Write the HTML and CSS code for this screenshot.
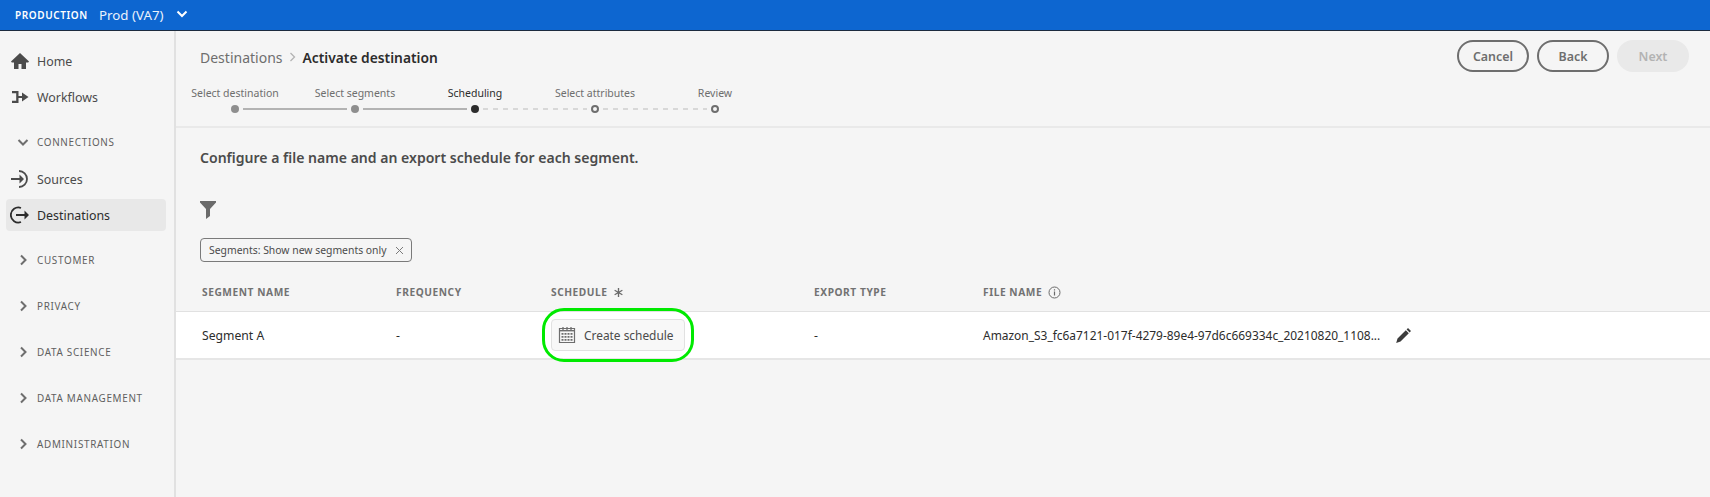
FILE: index.html
```html
<!DOCTYPE html>
<html lang="en">
<head>
<meta charset="utf-8">
<title>Activate destination</title>
<link rel="stylesheet" href="styles.css">
</head>
<body>
<header class="topbar">
  <span class="org">PRODUCTION</span>
  <span class="sandbox">Prod (VA7)</span>
  <svg class="top-chev" width="12" height="8" viewBox="0 0 12 8"><path d="M1.500 1.500 6 6l4.500-4.500" fill="none" stroke="#fff" stroke-width="2"/></svg>
</header>
<div class="shell">
  <nav class="sidebar">
    <a class="nav-item first"><svg class="nav-icon" viewBox="0 0 20 20"><path d="M10 2 1 10.600l.8.900H4V18h4.500v-5h3v5H16v-6.500h2.200l.8-.9z" fill="#4b4b4b"/></svg>Home</a>
    <a class="nav-item"><svg class="nav-icon" viewBox="0 0 20 20"><path d="M2 4h6.500v5h3.500V5.500L18.500 10 12 14.500V11H8.500v5H2v-2.200h4.200V6.200H2z" fill="#4b4b4b"/></svg>Workflows</a>
    <div class="group open"><svg class="chev" viewBox="0 0 12 12"><path d="M1.500 4 6 8.500 10.500 4" fill="none" stroke="#6e6e6e" stroke-width="2"/></svg>CONNECTIONS</div>
    <a class="nav-item tight first-tight"><svg class="nav-icon" viewBox="0 0 20 20"><path d="M9 2A8 8 0 1 1 9 18" fill="none" stroke="#4b4b4b" stroke-width="1.800"/><path d="M1 9h8.500V5.500L14 10l-4.500 4.500V11H1z" fill="#4b4b4b"/></svg>Sources</a>
    <a class="nav-item tight active"><svg class="nav-icon" viewBox="0 0 20 20"><path d="M11 3a7.500 7.500 0 1 0 0 14" fill="none" stroke="#2c2c2c" stroke-width="1.800"/><path d="M6 9h8.500V5.500L19 10l-4.500 4.500V11H6z" fill="#2c2c2c"/></svg>Destinations</a>
    <div class="group first-closed"><svg class="chev" viewBox="0 0 12 12"><path d="M4 1.500 8.500 6 4 10.500" fill="none" stroke="#6e6e6e" stroke-width="2"/></svg>CUSTOMER</div>
    <div class="group"><svg class="chev" viewBox="0 0 12 12"><path d="M4 1.500 8.500 6 4 10.500" fill="none" stroke="#6e6e6e" stroke-width="2"/></svg>PRIVACY</div>
    <div class="group"><svg class="chev" viewBox="0 0 12 12"><path d="M4 1.500 8.500 6 4 10.500" fill="none" stroke="#6e6e6e" stroke-width="2"/></svg>DATA SCIENCE</div>
    <div class="group"><svg class="chev" viewBox="0 0 12 12"><path d="M4 1.500 8.500 6 4 10.500" fill="none" stroke="#6e6e6e" stroke-width="2"/></svg>DATA MANAGEMENT</div>
    <div class="group"><svg class="chev" viewBox="0 0 12 12"><path d="M4 1.500 8.500 6 4 10.500" fill="none" stroke="#6e6e6e" stroke-width="2"/></svg>ADMINISTRATION</div>
  </nav>
  <main class="main">
    <section class="head">
      <div class="head-top">
        <div class="crumbs">
          <span class="crumb">Destinations</span>
          <svg class="crumb-sep" width="7" height="10" viewBox="0 0 7 10"><path d="M1.500 1 5.500 5l-4 4" fill="none" stroke="#b3b3b3" stroke-width="1.300"/></svg>
          <strong class="crumb-current">Activate destination</strong>
        </div>
        <div class="actions">
          <button class="btn">Cancel</button>
          <button class="btn">Back</button>
          <button class="btn disabled">Next</button>
        </div>
      </div>
      <div class="step-labels">
        <span>Select destination</span>
        <span>Select segments</span>
        <span class="current">Scheduling</span>
        <span>Select attributes</span>
        <span>Review</span>
      </div>
      <div class="track">
        <i class="dot done"></i><i class="line"></i>
        <i class="dot done"></i><i class="line"></i>
        <i class="dot now"></i><i class="line dashed"></i>
        <i class="dot todo"></i><i class="line dashed"></i>
        <i class="dot todo"></i>
      </div>
    </section>
    <section class="body">
      <h1 class="title">Configure a file name and an export schedule for each segment.</h1>
      <svg class="filter" width="16" height="18" viewBox="0 0 16 18"><path d="M0 0h16v1.500L10 8v7l-4 3V8L0 1.500z" fill="#6a6a6a"/></svg>
      <div class="chip">Segments: Show new segments only
        <svg width="9" height="9" viewBox="0 0 9 9"><path d="M1 1l7 7M8 1 1 8" fill="none" stroke="#7a7a7a" stroke-width="1"/></svg>
      </div>
    </section>
    <div class="table-head grid">
      <span>SEGMENT NAME</span>
      <span>FREQUENCY</span>
      <span class="with-icon">SCHEDULE <svg width="9" height="9" viewBox="0 0 10 10"><path d="M5 0v10M.7 2.500l8.600 5M9.300 2.500l-8.600 5" stroke="#6a6a6a" stroke-width="1.500"/></svg></span>
      <span>EXPORT TYPE</span>
      <span class="with-icon">FILE NAME <svg width="13" height="13" viewBox="0 0 13 13"><circle cx="6.500" cy="6.500" r="5.500" fill="none" stroke="#6a6a6a"/><path d="M6.500 5.500v4M6.500 3.200v1.300" stroke="#6a6a6a" stroke-width="1.200"/></svg></span>
    </div>
    <div class="table-row grid">
      <span>Segment A</span>
      <span>-</span>
      <span class="schedule-cell">
        <button class="create">
          <svg width="18" height="18" viewBox="0 0 18 18"><path d="M1.500 2.500h15v14h-15z" fill="none" stroke="#6e6e6e" stroke-width="1.200"/><path d="M1.500 4.700h15" stroke="#6e6e6e" stroke-width="1.400"/><path d="M5 1v3M9 1v3M13 1v3" stroke="#6e6e6e" stroke-width="1.300"/><path d="M3.500 7h2v1.700h-2zM6.500 7h2v1.700h-2zM9.500 7h2v1.700h-2zM12.500 7h2v1.700h-2zM3.500 10h2v1.700h-2zM6.500 10h2v1.700h-2zM9.500 10h2v1.700h-2zM12.500 10h2v1.700h-2zM3.500 13h2v1.700h-2zM6.500 13h2v1.700h-2zM9.500 13h2v1.700h-2zM12.500 13h2v1.700h-2z" fill="#6e6e6e"/></svg>
          Create schedule
        </button>
        <i class="ring"></i>
      </span>
      <span>-</span>
      <span class="file-cell"><span class="file-name">Amazon_S3_fc6a7121-017f-4279-89e4-97d6c669334c_20210820_1108...</span>
        <svg width="17" height="17" viewBox="0 0 17 17"><path d="M13 1 16 4 14.600 5.400 11.600 2.400zM10.800 3.200l3 3-8.300 8.300-4.300 1.400 1.300-4.400z" fill="#3c3c3c"/></svg>
      </span>
    </div>
  </main>
</div>
</body>
</html>
```
FILE: styles.css
```css
* { box-sizing: border-box; }
html, body { margin: 0; height: 100%; }
body {
  background: #f5f5f5;
  color: #4b4b4b;
  font-family: "Noto Sans", "Open Sans", sans-serif;
  overflow: hidden;
}
.topbar {
  height: 31px;
  background: #0d66d0;
  border-bottom: 1px solid #1c2b3e;
  display: flex;
  align-items: center;
  padding-left: 15px;
  color: #fff;
}
.org { font-size: 10px; font-weight: 600; letter-spacing: .6px; width: 84px; }
.sandbox { font-size: 13.300px; width: 77px; color: #eaf2fc; }
.top-chev { display: block; margin-top: -2px; }
.shell { display: flex; height: 466px; }
.sidebar {
  width: 176px;
  flex: none;
  border-right: 2px solid #e1e1e1;
  padding: 12px 8px 0 6px;
}
.nav-item {
  height: 36px;
  display: flex;
  align-items: center;
  gap: 7px;
  padding-left: 4px;
  font-size: 12.400px;
  color: #4b4b4b;
  border-radius: 4px;
}
.nav-item.tight { height: 32px; margin-top: 4px; }
.nav-item.first-tight { margin-top: 6px; }
.nav-item.active { background: #e8e8e8; color: #2c2c2c; }
.nav-icon { width: 20px; height: 20px; flex: none; }
.group {
  height: 46px;
  display: flex;
  align-items: center;
  padding-left: 11px;
  gap: 8px;
  font-size: 9.900px;
  letter-spacing: .7px;
  color: #5f5f5f;
}
.group.open { height: 30px; margin-top: 12px; }
.group.first-closed { margin-top: 6px; }
.chev { width: 12px; height: 12px; flex: none; }
.main { flex: 1; min-width: 0; }
.head {
  height: 97px;
  border-bottom: 2px solid #e9e9e9;
}
.head-top {
  display: flex;
  justify-content: space-between;
  padding: 9px 21px 0 24px;
  height: 54px;
}
.crumbs { display: flex; align-items: center; height: 34px; }
.crumb { font-size: 14px; color: #6e6e6e; }
.crumb-sep { margin: 0 7px 0 6px; }
.crumb-current { font-size: 13.800px; font-weight: 600; color: #2c2c2c; }
.actions { display: flex; gap: 8px; }
.btn {
  width: 72px;
  height: 32px;
  border: 2px solid #6e6e6e;
  border-radius: 16px;
  background: transparent;
  color: #6e6e6e;
  font: 600 12.400px "Noto Sans", sans-serif;
  padding: 0;
}
.btn.disabled { background: #e9e9e9; border-color: #e9e9e9; color: #b3b3b3; }
.step-labels {
  display: grid;
  grid-template-columns: repeat(5, 120px);
  margin-left: -1px;
  font-size: 10.500px;
  color: #6e6e6e;
  text-align: center;
  line-height: 16px;
}
.step-labels .current { color: #2c2c2c; }
.track {
  display: flex;
  align-items: center;
  margin: 4px 0 0 55px;
  height: 8px;
}
.dot { width: 8px; height: 8px; border-radius: 50%; flex: none; }
.dot.done { background: #8e8e8e; }
.dot.now { background: #2c2c2c; }
.dot.todo { background: #f5f5f5; border: 2px solid #6e6e6e; }
.line { width: 104px; height: 2px; margin: 0 4px; background: #b3b3b3; flex: none; }
.line.dashed { background: repeating-linear-gradient(90deg, #d8d8d8 0 5px, transparent 5px 10px); }
.body { padding: 20px 24px 0; }
.title { margin: 0; font-size: 14.050px; font-weight: 600; color: #4b4b4b; line-height: 20px; }
.filter { display: block; margin: 33px 0 0; }
.chip {
  margin-top: 19px;
  width: 212px;
  height: 24px;
  border: 1px solid #7a7a7a;
  border-radius: 4px;
  display: flex;
  align-items: center;
  justify-content: space-between;
  padding: 0 7px 0 8px;
  font-size: 10.400px;
  color: #4b4b4b;
  white-space: nowrap;
}
.grid {
  display: grid;
  grid-template-columns: 194px 155px 263px 169px 1fr;
  padding-left: 26px;
  align-items: center;
}
.table-head {
  margin-top: 18px;
  height: 24px;
  font-size: 10.200px;
  font-weight: 700;
  letter-spacing: .55px;
  color: #727272;
}
.with-icon { display: flex; align-items: center; gap: 6px; }
.table-row {
  margin-top: 7px;
  height: 49px;
  background: #fff;
  border-top: 1px solid #e1e1e1;
  border-bottom: 2px solid #e6e6e6;
  font-size: 12.200px;
  color: #2c2c2c;
}
.schedule-cell { position: relative; display: block; height: 32px; }
.create {
  width: 134px;
  height: 32px;
  display: flex;
  align-items: center;
  gap: 8px;
  padding: 0 0 0 6px;
  background: #f8f8f8;
  border: 1px solid #e1e1e1;
  border-radius: 4px;
  font: 11.900px "Noto Sans", sans-serif;
  color: #4b4b4b;
}
.ring {
  position: absolute;
  left: -9px;
  top: -11px;
  width: 152px;
  height: 54px;
  border: 3px solid #00ea00;
  border-radius: 22px;
}
.file-cell { display: flex; align-items: center; gap: 14px; white-space: nowrap; }
.file-name { font-size: 11.950px; width: 398px; }
```
